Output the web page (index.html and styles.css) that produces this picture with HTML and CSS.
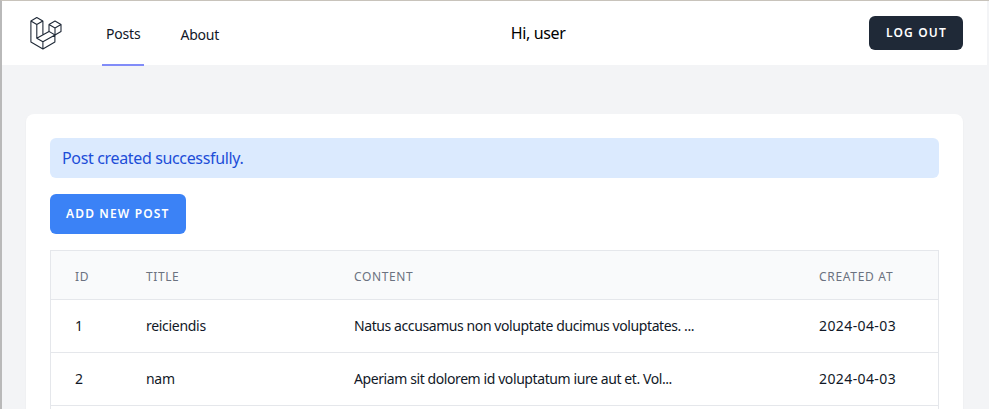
FILE: index.html
```
<!DOCTYPE html>
<html lang="en">
<head>
  <meta charset="UTF-8" />
  <meta name="viewport" content="width=device-width, initial-scale=1" />
  <title>Posts</title>
  <link rel="stylesheet" href="styles.css">
</head>
<body>
  <header class="navbar">
    <nav class="nav-left">
      <a class="logo" href="#" aria-label="Home">
        <svg width="32" height="33" viewBox="0 0 32 33" fill="none" stroke="#1f2937" stroke-width="1.1" stroke-linejoin="round">
          <path d="M.9 4 6.8.6l6 3.4-6 3.5zM.9 4v21l12 7 12-7v-6.9M6.8 7.5v13.8l6.1 3.5V32M12.9 4v13.8M6.8 21.3 19 14.4l6 3.6-12.1 6.8" />
          <path d="m19 7.6 6-3.5 6 3.5-6 3.5zM19 7.6v6.8M25 11.1V18l6-3.5V7.6" />
        </svg>
      </a>
      <a class="nav-link active" href="#">Posts</a>
      <a class="nav-link" href="#">About</a>
    </nav>
    <div class="greeting">Hi, user</div>
    <button class="btn btn-dark">Log out</button>
  </header>

  <main class="card">
    <div class="alert">Post created successfully.</div>
    <a class="btn btn-blue" href="#">Add new post</a>

    <table class="posts">
      <thead>
        <tr>
          <th class="col-id">ID</th>
          <th class="col-title">Title</th>
          <th class="col-content">Content</th>
          <th class="col-date">Created at</th>
        </tr>
      </thead>
      <tbody>
        <tr>
          <td>1</td>
          <td>reiciendis</td>
          <td class="excerpt">Natus accusamus non voluptate ducimus voluptates. ...</td>
          <td class="date">2024-04-03</td>
        </tr>
        <tr>
          <td>2</td>
          <td>nam</td>
          <td class="excerpt">Aperiam sit dolorem id voluptatum iure aut et. Vol...</td>
          <td class="date">2024-04-03</td>
        </tr>
      </tbody>
    </table>
  </main>
</body>
</html>
```
FILE: styles.css
```
* {
  box-sizing: border-box;
}
body {
  display: flex;
  flex-direction: column;
  margin: 0;
  height: 409px;
  overflow: hidden;
  font-family: "Noto Sans", sans-serif;
  font-size: 16px;
  line-height: 24px;
  letter-spacing: -0.35px;
  color: #111827;
  background: #f3f4f6;
  border-top: 1px solid #c8c3bb;
  border-left: 2px solid #b9b9b9;
}
a {
  color: inherit;
  text-decoration: none;
}
.navbar {
  display: flex;
  flex-shrink: 0;
  align-items: flex-start;
  justify-content: space-between;
  height: 64px;
  margin-right: 2px;
  padding: 0 24px 0 28px;
  background: #fff;
}
.nav-left {
  display: flex;
  height: 65px;
}
.logo {
  display: flex;
  align-items: flex-start;
  padding-top: 16px;
  margin-right: 40px;
}
.nav-link {
  height: 65px;
  padding: 21px 4px 0;
  font-size: 14px;
  letter-spacing: -0.2px;
  border-bottom: 2px solid transparent;
}
.nav-link + .nav-link {
  margin-left: 32px;
  padding-top: 22px;
}
.active {
  border-color: #818cf8;
}
.greeting {
  padding: 20px 16px 0 0;
  color: #000;
}
.btn {
  display: inline-flex;
  align-items: center;
  border: 0;
  border-radius: 6px;
  padding: 0 16px;
  font-family: inherit;
  font-size: 12px;
  font-weight: 600;
  line-height: 16px;
  letter-spacing: 1.15px;
  text-transform: uppercase;
  white-space: nowrap;
  color: #fff;
}
.btn-dark {
  width: 94px;
  height: 34px;
  margin-top: 15px;
  padding-left: 17px;
  background: #1f2937;
}
.btn-blue {
  width: 136px;
  height: 40px;
  margin-bottom: 16px;
  background: #3b82f6;
}
.card {
  flex: 1;
  margin: 49px 26px 0 24px;
  padding: 24px 24px 0;
  background: #fff;
  border-radius: 8px 8px 0 0;
  box-shadow: 0 1px 2px rgba(0, 0, 0, 0.05);
}
.alert {
  height: 40px;
  margin-bottom: 16px;
  padding: 8px 12px;
  color: #1d4ed8;
  background: #dbeafe;
  border-radius: 6px;
}
/* separate borders, so the side borders run on below the last row */
.posts {
  width: 100%;
  height: 159px;
  table-layout: fixed;
  border-collapse: separate;
  border-spacing: 0;
  border: 1px solid #e5e7eb;
  border-bottom: 0;
  padding-bottom: 3px;
}
.posts th {
  height: 48px;
  padding: 3px 24px 0;
  font-size: 12px;
  font-weight: 400;
  line-height: 16px;
  letter-spacing: 0.6px;
  text-align: left;
  text-transform: uppercase;
  white-space: nowrap;
  color: #6b7280;
  background: #f9fafb;
}
.posts td {
  height: 53px;
  padding: 0 24px;
  font-size: 14px;
  line-height: 20px;
  letter-spacing: -0.3px;
  white-space: nowrap;
  border-top: 1px solid #e5e7eb;
}
.posts tr:last-child td {
  height: 54px;
  border-bottom: 1px solid #e5e7eb;
}
.posts .excerpt {
  letter-spacing: -0.41px;
}
.posts .date {
  letter-spacing: 0.4px;
}
.posts .col-date {
  letter-spacing: 0.7px;
}
.col-id {
  width: 71px;
}
.col-title {
  width: 208px;
}
.col-content {
  width: 465px;
}
```
